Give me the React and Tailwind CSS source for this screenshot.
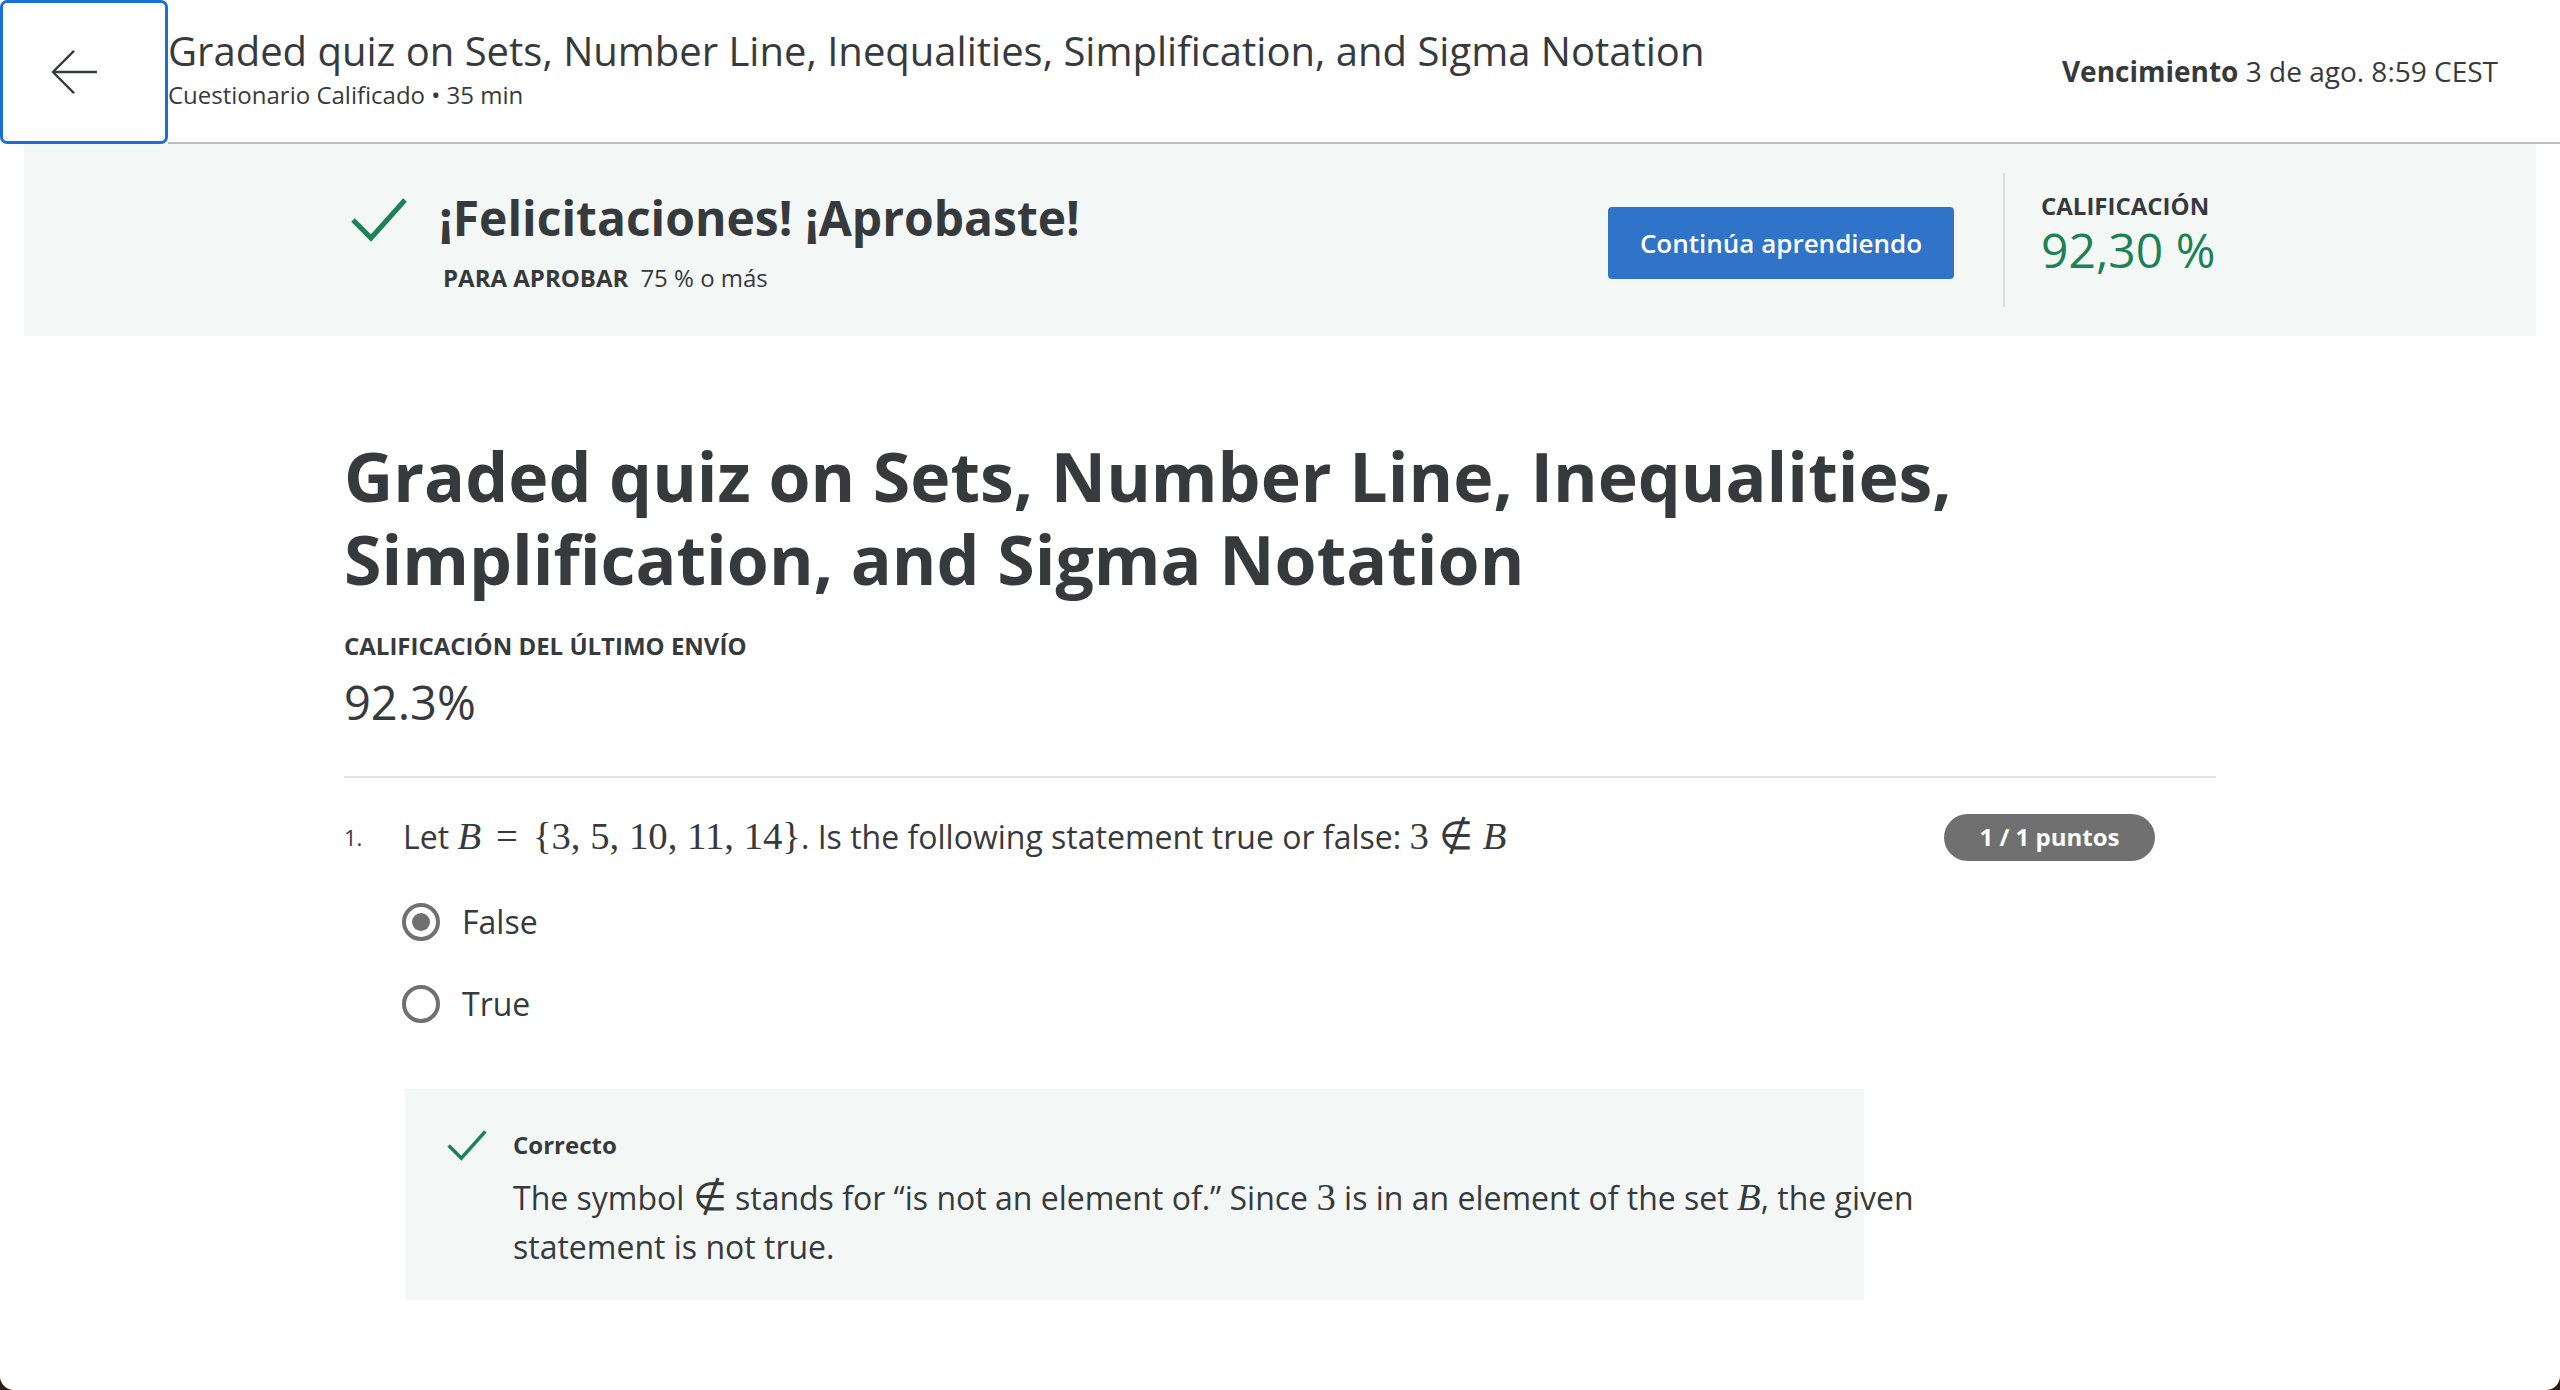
import React from 'react'

const sans = { fontFamily: '"Open Sans", "Noto Sans", sans-serif' }

function M({ children, i }) {
  return (
    <span className={'font-["Liberation_Serif",serif] text-[1.21em] leading-none ' + (i ? 'italic' : '')}>{children}</span>
  )
}

function Check({ className }) {
  return (
    <svg viewBox="0 0 56 44" className={className} fill="none">
      <path d="M2 22 L20 40 L54 2" stroke="#1e8155" strokeWidth="5" />
    </svg>
  )
}

function Radio({ checked, label }) {
  return (
    <div className="flex items-center h-[48px]">
      <div className="w-[38px] h-[38px] rounded-full border-[4px] border-[#707070] flex items-center justify-center">
        {checked && <div className="w-[18px] h-[18px] rounded-full bg-[#707070]" />}
      </div>
      <span className="ml-[22px] text-[32px] leading-[40px] text-[#373a3c]">{label}</span>
    </div>
  )
}

export default function App() {
  return (
    <div className="bg-[#2a1e14] h-[1390px]" style={sans}>
      <div className="bg-white h-[1390px] rounded-b-[14px] overflow-hidden text-[#373a3c]">
        {/* top bar */}
        <div className="flex h-[144px]">
          <button className="w-[168px] h-[144px] shrink-0 border-[3px] border-[#1a6fd6] rounded-[7px] flex items-center justify-center bg-white pr-[20px]">
            <svg viewBox="0 0 48 48" className="w-[46px] h-[46px]" fill="none" stroke="#373a3c" strokeWidth="2.4">
              <path d="M48 24 H2 M24 2 L2 24 L24 46" />
            </svg>
          </button>
          <div className="flex-1 flex justify-between border-b-2 border-[#bdbdbd]">
            <div className="pt-[27px]">
              <h1 className="text-[40px] leading-[48px] whitespace-nowrap">Graded quiz on Sets, Number Line, Inequalities, Simplification, and Sigma Notation</h1>
              <div className="mt-[5px] text-[24px] leading-[30px]">Cuestionario Calificado • 35 min</div>
            </div>
            <div className="self-center pr-[62px] text-[28px] leading-[36px] whitespace-nowrap">
              <span className="font-bold">Vencimiento</span> 3 de ago. 8:59 CEST
            </div>
          </div>
        </div>

        {/* result banner */}
        <div className="mx-[24px] h-[192px] bg-[#f3f8f7] flex items-center">
          <div className="w-[1872px] mx-auto flex items-center">
            <div className="flex-1 flex items-start">
              <Check className="w-[56px] h-[44px] ml-[7px] mt-[10px]" />
              <div className="ml-[32px]">
                <div className="text-[48px] leading-[60px] font-bold">¡Felicitaciones! ¡Aprobaste!</div>
                <div className="mt-[16px] ml-[4px] text-[24px] leading-[28px]">
                  <span className="font-bold">PARA APROBAR</span>
                  <span className="ml-[12px]">75 % o más</span>
                </div>
              </div>
            </div>
            <button className="mt-[6px] w-[346px] h-[72px] bg-[#2f74c9] rounded-[4px] text-white text-[26px] font-semibold">Continúa aprendiendo</button>
            <div className="ml-[49px] w-[2px] h-[134px] bg-[#dadfdf]" />
            <div className="pl-[36px] w-[211px] mt-[-10px]">
              <div className="text-[24px] leading-[30px] font-bold">CALIFICACIÓN</div>
              <div className="text-[48px] leading-[58px] text-[#1e8155]">92,30 %</div>
            </div>
          </div>
        </div>

        {/* main */}
        <div className="w-[1872px] mx-auto">
          <h2 className="mt-[98px] text-[68px] leading-[83px] font-bold w-[1760px]">
            Graded quiz on Sets, Number Line, Inequalities, Simplification, and Sigma Notation
          </h2>
          <div className="mt-[32px] text-[24px] leading-[28px] font-bold">CALIFICACIÓN DEL ÚLTIMO ENVÍO</div>
          <div className="mt-[14px] text-[47px] leading-[56px]">92.3%</div>
          <div className="mt-[46px] h-[2px] bg-[#e3e3e3]" />

          <div className="mt-[35px] flex items-center h-[48px]">
            <span className="w-[59px] text-[22px]">1.</span>
            <div className="flex-1 text-[32px] leading-[40px] whitespace-nowrap">
              Let <M i>B</M><span className="mx-[15px]"><M>=</M></span><M>{'{3, 5, 10, 11, 14}'}</M>. Is the following statement true or false: <M>3</M><span className="mx-[10px]"><M>∉</M></span><M i>B</M>
            </div>
            <span className="mr-[61px] w-[211px] h-[47px] rounded-full bg-[#707070] text-white text-[24px] font-bold flex items-center justify-center">1 / 1 puntos</span>
          </div>

          <div className="ml-[58px] mt-[37px] flex flex-col gap-[34px]">
            <Radio checked label="False" />
            <Radio label="True" />
          </div>

          <div className="ml-[61px] mt-[61px] w-[1459px] h-[211px] bg-[#f3f8f7] pl-[42px] pt-[42px]">
            <div className="flex items-center h-[28px]">
              <Check className="w-[40px] h-[31px]" />
              <span className="ml-[26px] text-[24px] font-bold">Correcto</span>
            </div>
            <p className="ml-[66px] mt-[14px] w-[1430px] text-[32px] leading-[49px]">
              The symbol <M>∉</M> stands for “is not an element of.” Since <M>3</M> is in an element of the set <M i>B</M>, the given{' '}
              <span className="inline-block">statement is not true.</span>
            </p>
          </div>
        </div>
      </div>
    </div>
  )
}
